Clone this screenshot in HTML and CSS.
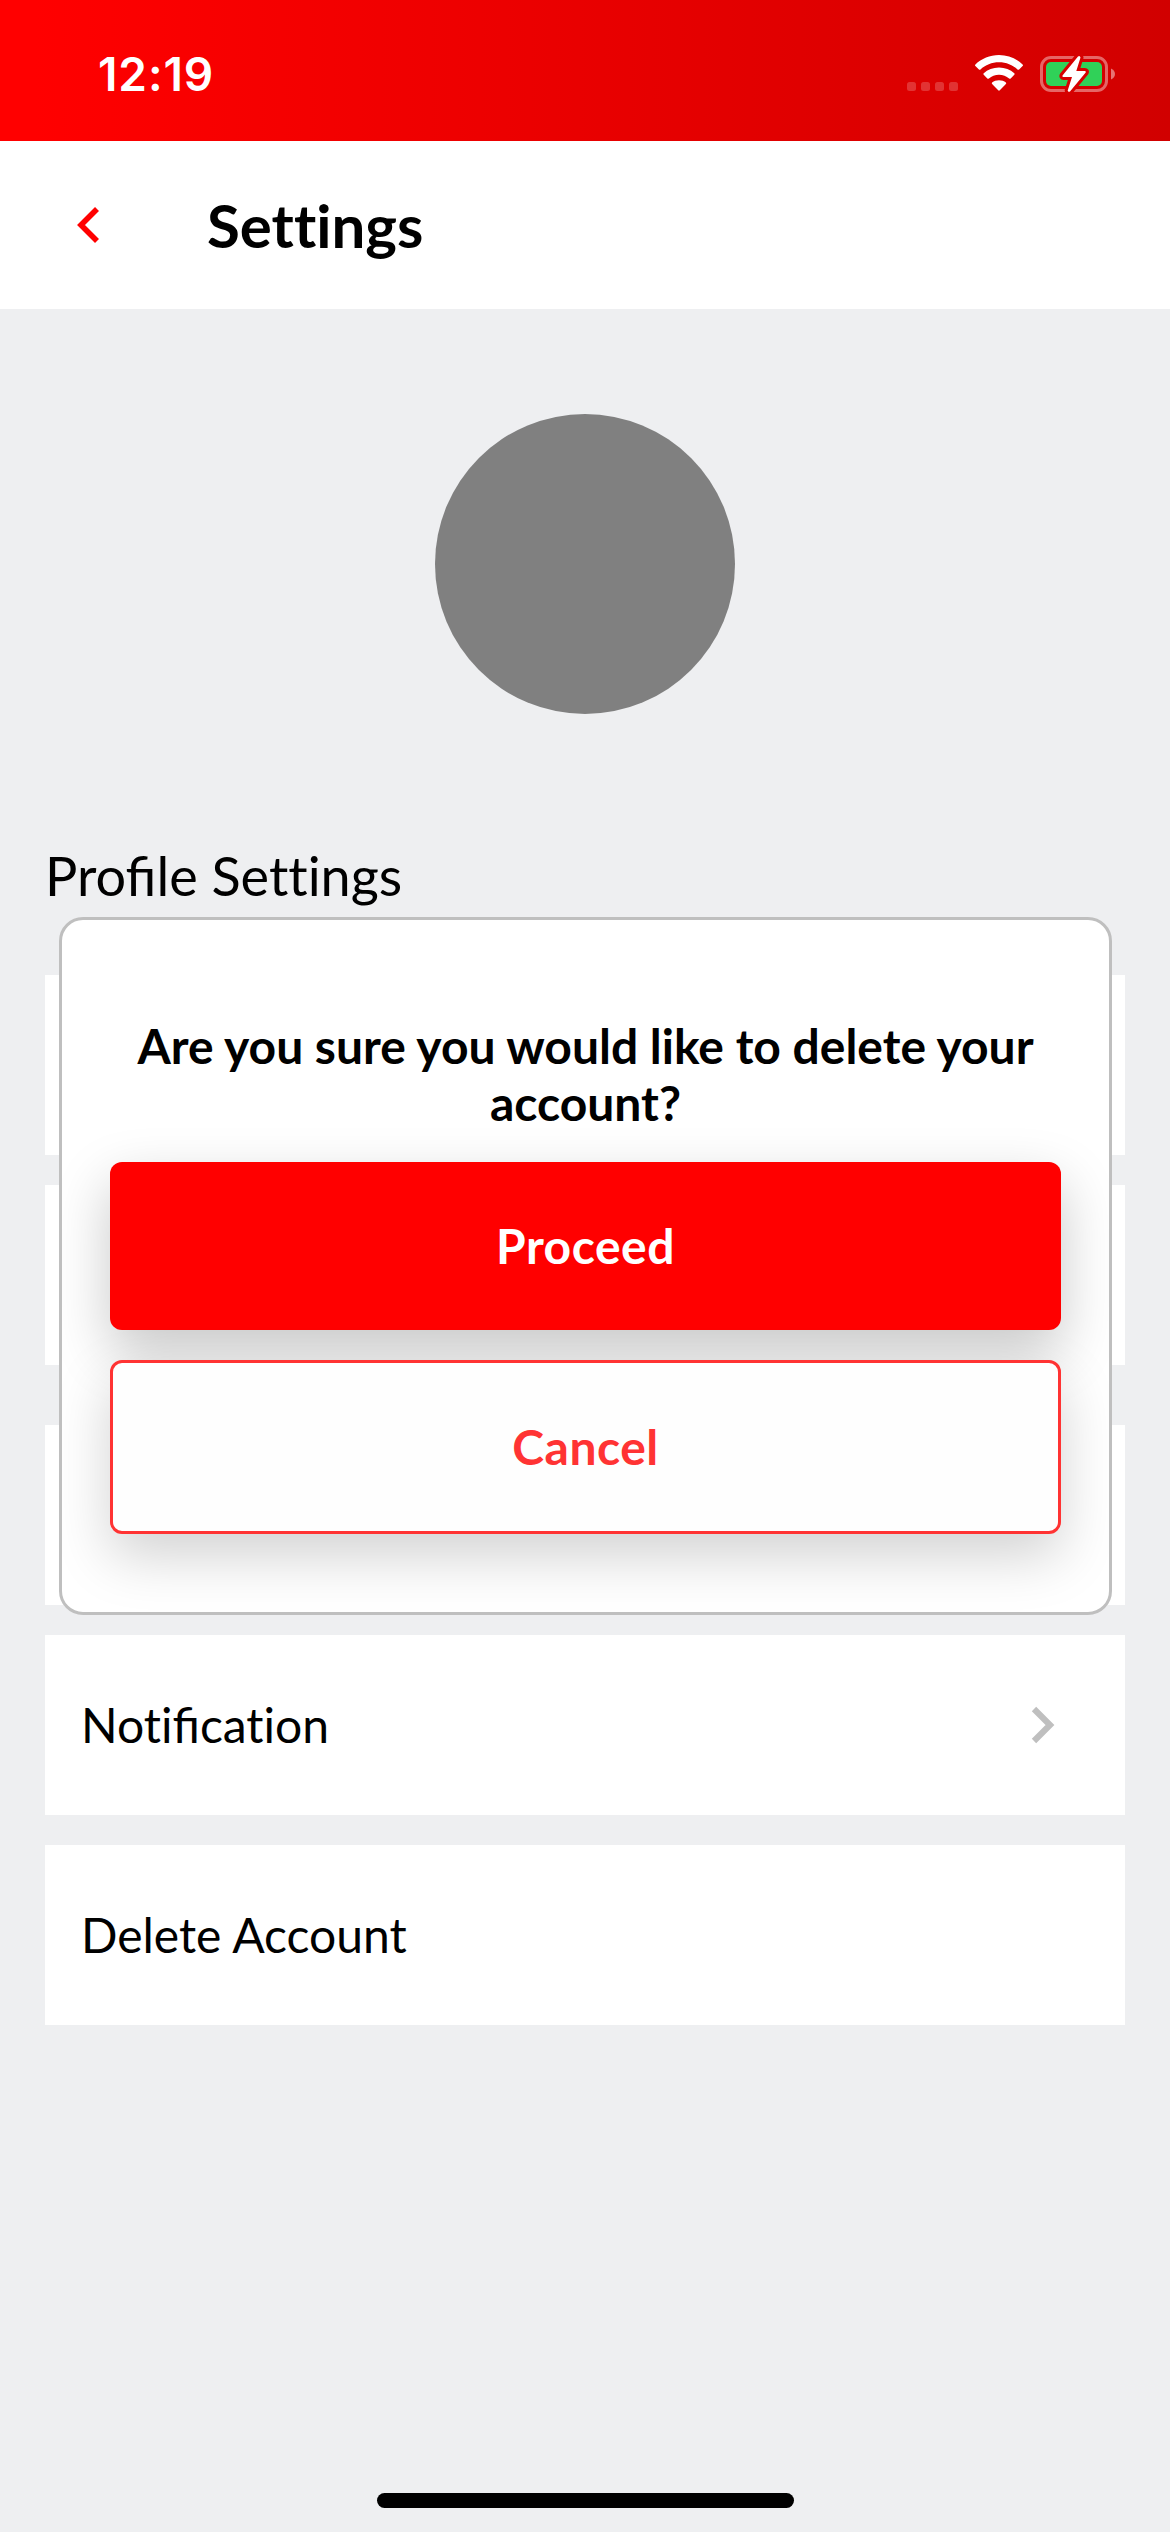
FILE: index.html
```html
<!DOCTYPE html>
<html lang="en">
<head>
<meta charset="utf-8">
<title>Settings</title>
<link rel="stylesheet" href="styles.css">
</head>
<body>
<div class="screen">
  <div class="status-bar">
    <span class="time">12:19</span>
    <div class="status-icons">
      <svg class="signal" width="51" height="9" viewBox="0 0 51 9" fill="#fff" fill-opacity=".2">
        <rect width="9" height="9" rx="2.5"/><rect x="14" width="9" height="9" rx="2.5"/><rect x="28" width="9" height="9" rx="2.5"/><rect x="42" width="9" height="9" rx="2.5"/>
      </svg>
      <svg class="wifi" width="50" height="38" viewBox="0 0 50 38" fill="#fff">
        <path d="M25 1C15.800 1 7.500 4.600 1.400 10.400Q.6 11.200 1.400 12L4.900 15.500Q5.700 16.200 6.500 15.500C11.300 11 17.800 8.300 25 8.300S38.700 11 43.500 15.500Q44.300 16.200 45.100 15.500L48.600 12Q49.400 11.200 48.600 10.400C42.500 4.600 34.200 1 25 1Z"/>
        <path d="M25 13.500C19 13.500 13.700 15.700 9.700 19.300Q8.900 20 9.700 20.800L13.300 24.400Q14.100 25.100 14.900 24.400C17.600 22.100 21.100 20.700 25 20.700S32.400 22.100 35.100 24.400Q35.900 25.100 36.700 24.400L40.300 20.800Q41.100 20 40.300 19.300C36.300 15.700 31 13.500 25 13.500Z"/>
        <path d="M25 26.200C22.300 26.200 19.900 27 18.100 28.500Q17.400 29.200 18.100 30L24.200 36.300Q25 37 25.800 36.300L31.900 30Q32.600 29.200 31.900 28.500C30.100 27 27.700 26.200 25 26.200Z"/>
      </svg>
      <svg class="battery" width="76" height="40" viewBox="0 0 76 40">
        <rect x="1.500" y="3.500" width="65" height="33" rx="9.500" fill="none" stroke="#fff" stroke-opacity=".4" stroke-width="3"/>
        <path d="M71 14.500C73.500 15.600 75 17.600 75 20S73.500 24.400 71 25.500Z" fill="#fff" fill-opacity=".45"/>
        <rect x="6" y="8" width="56" height="24" rx="5" fill="#30d158"/>
        <path d="M38 2.500L22.500 21.500Q22 23 23.500 23H32L27.700 36.500Q28 38.500 30 37.500L45.700 18.500Q46.500 17 44.700 17H36.300L40.500 3.500Q39.800 1 38 2.500Z" fill="#fff" stroke="#d70000" stroke-width="6" stroke-linejoin="round" paint-order="stroke"/>
      </svg>
    </div>
  </div>

  <header class="header">
    <svg class="back" width="24" height="38" viewBox="0 0 24 38" fill="none" stroke="#f00" stroke-width="5.600"><path d="M21 3L5 19L21 35"/></svg>
    <h1 class="title no-liga">Settings</h1>
  </header>

  <main class="content">
    <div class="avatar"></div>
    <h2 class="section-title">Profile <span class="no-liga">Settings</span></h2>
    <div class="list">
      <div class="row"></div>
      <div class="row"></div>
      <div class="row row-spaced"></div>
      <div class="row">
        <span><span class="no-liga">Noti</span>fi<span class="no-liga">cation</span></span>
        <svg width="26" height="40" viewBox="0 0 26 40" fill="none" stroke="#bfbfbf" stroke-width="6.200"><path d="M4 4L20 20L4 36"/></svg>
      </div>
      <div class="row"><span>Delete Account</span></div>
    </div>
  </main>

  <div class="dialog">
    <p class="question">Are you sure you would like to delete your account?</p>
    <button class="button proceed">Proceed</button>
    <button class="button cancel">Cancel</button>
  </div>
  <div class="home-indicator"></div>
</div>
</body>
</html>
```
FILE: styles.css
```css
* { box-sizing: border-box; }
body { margin: 0; font-family: Lato, sans-serif; color: #000; }
.no-liga { font-variant-ligatures: none; }
.screen {
  position: relative;
  width: 1170px;
  height: 2532px;
  overflow: hidden;
  background: #eeeff1;
}
.status-bar {
  display: flex;
  justify-content: space-between;
  align-items: flex-start;
  height: 141px;
  padding: 46px 54px 0 98px;
  background: linear-gradient(90deg, #f00 3%, #d10000 100%);
}
.time {
  margin-top: -1px;
  font: 600 46px/58px Inter, sans-serif;
  letter-spacing: .9px;
  color: #fff;
}
.status-icons { display: flex; align-items: flex-start; }
.signal { margin-top: 36px; }
.wifi { margin: 8px 0 0 16px; }
.battery { margin: 8px 0 0 16px; }
.header {
  display: flex;
  align-items: center;
  height: 168px;
  padding-left: 76px;
  background: #fff;
}
.title {
  margin: 0 0 1px 107px;
  font-size: 60px;
  line-height: 72px;
  font-weight: 700;
}
.content { padding: 105px 45px 0; }
.avatar {
  width: 300px;
  height: 300px;
  margin: 0 auto;
  border-radius: 50%;
  background: #808080;
}
.section-title {
  margin: 129px 0 0;
  font-size: 54px;
  line-height: 65px;
  font-weight: 400;
}
.list {
  display: flex;
  flex-direction: column;
  gap: 30px;
  margin-top: 67px;
}
.row {
  display: flex;
  align-items: center;
  justify-content: space-between;
  height: 180px;
  padding: 0 69px 0 36px;
  background: #fff;
  font-size: 48px;
  line-height: 58px;
}
.row-spaced { margin-top: 30px; }
.dialog {
  position: absolute;
  left: 59px;
  top: 917px;
  width: 1053px;
  height: 698px;
  padding: 97px 48px 0;
  overflow: hidden;
  display: flex;
  flex-direction: column;
  border: 3px solid #bfbfbf;
  border-radius: 24px;
  background: #fff;
}
.question {
  margin: 0 0 31px;
  font-size: 48px;
  line-height: 57px;
  font-weight: 700;
  text-align: center;
}
.button {
  flex: none;
  padding: 0;
  border: 0;
  border-radius: 12px;
  font: 700 48px/58px Lato, sans-serif;
  letter-spacing: .5px;
  text-align: center;
}
.proceed {
  height: 168px;
  background: #f00;
  color: #fff;
  box-shadow: 0 22px 56px rgba(0, 0, 0, .22);
}
.cancel {
  height: 174px;
  margin-top: 30px;
  border: 3px solid #f33;
  background: #fefefe;
  color: #f33;
  box-shadow: 0 22px 56px rgba(0, 0, 0, .18);
}
.home-indicator {
  position: absolute;
  left: 377px;
  bottom: 24px;
  width: 417px;
  height: 15px;
  border-radius: 8px;
  background: #000;
}
```
